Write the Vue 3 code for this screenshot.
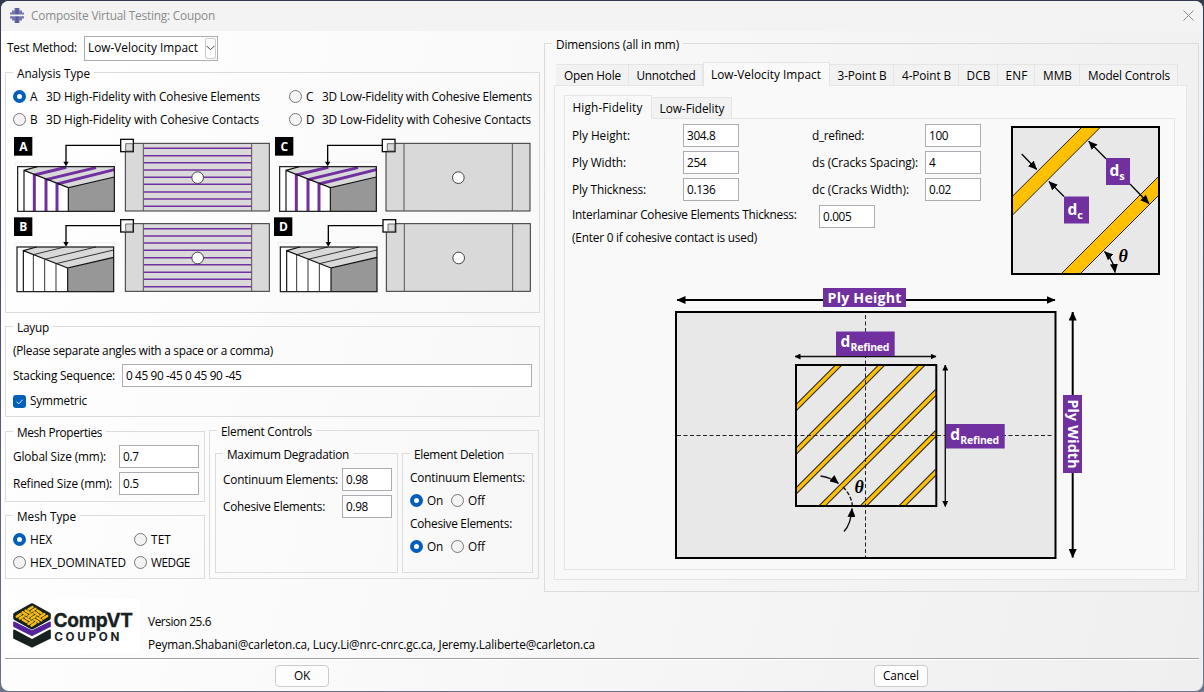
<script setup>
import { ref, reactive } from 'vue'

// Spreads a label's letters so that the text takes up the given width.
const vFit = {
  mounted(el, { value }) {
    if (!value) return
    const range = document.createRange()
    range.selectNodeContents(el)
    const natural = range.getBoundingClientRect().width
    el.style.letterSpacing = (value - natural) / el.textContent.length + 'px'
  }
}

const analysis = ref('A')
const analysisTypes = [
  { id: 'A', text: '3D High-Fidelity with Cohesive Elements', w: 214 },
  { id: 'C', text: '3D Low-Fidelity with Cohesive Elements', w: 210 },
  { id: 'B', text: '3D High-Fidelity with Cohesive Contacts', w: 213 },
  { id: 'D', text: '3D Low-Fidelity with Cohesive Contacts', w: 209 }
]
const meshType = ref('HEX')
const meshTypes = [
  { id: 'HEX', w: 22 },
  { id: 'TET', w: 20 },
  { id: 'HEX_DOMINATED', w: 96 },
  { id: 'WEDGE', w: 39 }
]
const form = reactive({
  stacking: '0 45 90 -45 0 45 90 -45',
  global: '0.7', refined: '0.5', contDeg: '0.98', cohDeg: '0.98',
  height: '304.8', width: '254', thick: '0.136',
  dref: '100', ds: '4', dc: '0.02', inter: '0.005'
})
const deletion = [
  { text: 'Continuum Elements:', w: 115 },
  { text: 'Cohesive Elements:', w: 102 }
]
const tabs = [
  { text: 'Open Hole', w: 57, box: 73 },
  { text: 'Unnotched', w: 59, box: 74 },
  { text: 'Low-Velocity Impact', w: 110, box: 127 },
  { text: '3-Point B', w: 49, box: 64 },
  { text: '4-Point B', w: 49, box: 65 },
  { text: 'DCB', w: 24, box: 39 },
  { text: 'ENF', w: 22, box: 37 },
  { text: 'MMB', w: 29, box: 45 },
  { text: 'Model Controls', w: 82, box: 98 }
]
const subTabs = [
  { text: 'High-Fidelity', w: 70, box: 88 },
  { text: 'Low-Fidelity', w: 65, box: 80 }
]
const dimsLeft = [
  { text: 'Ply Height:', w: 58, key: 'height' },
  { text: 'Ply Width:', w: 54, key: 'width' },
  { text: 'Ply Thickness:', w: 74, key: 'thick' }
]
const dimsRight = [
  { text: 'd_refined:', w: 52, key: 'dref' },
  { text: 'ds (Cracks Spacing):', w: 106, key: 'ds' },
  { text: 'dc (Cracks Width):', w: 97, key: 'dc' }
]

// Diagram panels, drawn in thirds of a pixel.
const panels = [
  { id: 'A', box: 42, cube: 0, link: 0, plate: 0, y: 0, bands: true, lines: true },
  { id: 'B', box: 42, cube: -2, link: 0, plate: 0, y: 241, bands: false, lines: true },
  { id: 'C', box: 825, cube: 786, link: 785, plate: 782, y: 0, bands: true, lines: false },
  { id: 'D', box: 822, cube: 788, link: 787, plate: 783, y: 241, bands: false, lines: false }
]
const plies = [55, 77, 98, 120, 142, 163, 186, 207, 229]

const stripes = [
  'M795 408.7L839.7 364', 'M795 452.3L882.7 364', 'M795 492L923 364',
  'M821 507L937 391.3', 'M862.3 507L937 432.3', 'M901 507L937 471'
]

// Woven tows of the logo's top layer.
const weave = []
for (let i = 0; i < 3; i++) {
  for (let j = 0; j < 3; j++) {
    const a = [17.6, 10.8], b = [-17.6, 10.8]
    const cx = 96 + (i - j) * 17.6, cy = 346.5 + (i + j + 1) * 10.8
    const [d, o] = (i + j) % 2 ? [a, b] : [b, a]
    for (const s of [-0.25, 0.25]) {
      const x = cx + o[0] * s, y = cy + o[1] * s
      weave.push(`M${x - d[0] * 0.34} ${y - d[1] * 0.34}L${x + d[0] * 0.34} ${y + d[1] * 0.34}`)
    }
  }
}
</script>

<template>
  <div class="desktop">
    <div class="window">
      <header class="titlebar">
        <svg class="app-icon" width="16" height="17" viewBox="0 0 16 17">
          <path d="M5.500 1h5v2.500h2.500v2h2v6h-2v2h-2.500v2.500h-5v-2.500h-2.500v-2h-2v-6h2v-2h2.500z" fill="#7775b0" />
          <path d="M6.500 1h3v15h-3z" fill="#5b5a9c" />
          <path d="M1 7.600h14v1.600h-14z" fill="#f3f3f3" />
        </svg>
        <span v-fit="184">Composite Virtual Testing: Coupon</span>
        <svg class="close" width="11" height="11" viewBox="0 0 11 11"><path d="M0.500 0.500l10 10M10.500 0.500l-10 10" stroke="#8a8a8a" fill="none" /></svg>
      </header>

      <main class="content">
        <section class="left">
          <div class="method">
            <span v-fit="70">Test Method:</span>
            <div class="combo">
              <span v-fit="110">Low-Velocity Impact</span>
              <div class="drop"><svg width="9" height="6" viewBox="0 0 9 6"><path d="M0.500 0.800l4 4l4-4" fill="none" stroke="#444" /></svg></div>
            </div>
          </div>

          <fieldset class="analysis">
            <legend><span v-fit="73">Analysis Type</span></legend>
            <div class="types">
              <label v-for="t in analysisTypes" :key="t.id" class="opt">
                <input v-model="analysis" type="radio" name="analysis" :value="t.id">
                <span class="letter">{{ t.id }}</span><span v-fit="t.w">{{ t.text }}</span>
              </label>
            </div>
            <svg class="schema" width="533" height="170" viewBox="6 131 533 170">
              <g transform="translate(0 130) scale(0.33333)">
                <g v-for="p in panels" :key="p.id" :transform="`translate(0 ${p.y})`">
                  <g :transform="`translate(${p.cube} 0)`">
                    <path d="M45 97H346V109H45z" fill="#fdfdfd" stroke="#ececec" stroke-width="2" />
                    <rect x="53" y="110" width="290" height="134" fill="#fff" />
                    <path d="M72 121L112 110H343V141L205 173z" fill="#d9d9d9" />
                    <path d="M205 173L343 141V244H205z" fill="#979797" />
                    <g v-if="p.bands" stroke="#7030a0" stroke-width="9" fill="none">
                      <path d="M103 133V243M138 147V243M171 160V243" />
                      <path d="M103 135L199 112M138 149L288 113M171 162L343 119" />
                    </g>
                    <path v-else d="M102 243V133L196 110M136 243V147L290 110M170 243V160L343 119" stroke="#333" stroke-width="3" fill="none" />
                    <path d="M205 243V173L343 141M72 243V121L205 173M72 121L112 110" stroke="#111" stroke-width="3.500" fill="none" />
                    <rect x="53" y="110" width="290" height="134" fill="none" stroke="#111" stroke-width="3.500" />
                  </g>
                  <g :transform="`translate(${p.plate} 0)`">
                    <rect x="376" y="40" width="432" height="203" fill="#d9d9d9" stroke="#333" stroke-width="3" />
                    <g v-if="p.lines" stroke="#7030a0" stroke-width="4.500">
                      <path v-for="y in plies" :key="y" :d="`M431 ${y}H755`" />
                    </g>
                    <path d="M430 40V243M755 40V243" stroke="#555" stroke-width="3" />
                    <circle cx="593" cy="143" r="17.500" fill="#fff" stroke="#444" stroke-width="3" />
                  </g>
                  <g :transform="`translate(${p.link} 0)`">
                    <rect x="362" y="28" width="38" height="37" fill="#fff" stroke="#111" stroke-width="4" />
                    <path d="M377 63V41H398V63z" fill="#d9d9d9" stroke="#555" stroke-width="2.500" />
                    <path d="M361 46H198V97" fill="none" stroke="#000" stroke-width="4" />
                    <path d="M190 95H206L198 109z" />
                  </g>
                  <rect :x="p.box" y="21" width="55" height="56" />
                  <text :x="p.box + 28" y="63" class="tag">{{ p.id }}</text>
                </g>
              </g>
            </svg>
          </fieldset>

          <fieldset class="layup">
            <legend><span v-fit="32">Layup</span></legend>
            <p class="note"><span v-fit="260">(Please separate angles with a space or a comma)</span></p>
            <div class="stack">
              <span v-fit="102">Stacking Sequence:</span>
              <input v-model="form.stacking" class="field">
            </div>
            <label class="check">
              <svg width="13" height="13" viewBox="0 0 13 13"><rect width="13" height="13" rx="3" fill="#005fb8" /><path d="M3.500 6.700l2.200 2.200l4-4.200" stroke="#d5e6f5" fill="none" /></svg>
              <span v-fit="57">Symmetric</span>
            </label>
          </fieldset>

          <div class="mesh-area">
            <div class="mesh-col">
              <fieldset class="mesh-props">
                <legend><span v-fit="85">Mesh Properties</span></legend>
                <div class="mesh-grid">
                  <span v-fit="93">Global Size (mm):</span><input v-model="form.global" class="field">
                  <span v-fit="99">Refined Size (mm):</span><input v-model="form.refined" class="field">
                </div>
              </fieldset>
              <fieldset class="mesh-type">
                <legend><span v-fit="59">Mesh Type</span></legend>
                <div class="type-grid">
                  <label v-for="m in meshTypes" :key="m.id" class="opt">
                    <input v-model="meshType" type="radio" name="mesh" :value="m.id"><span v-fit="m.w">{{ m.id }}</span>
                  </label>
                </div>
              </fieldset>
            </div>
            <fieldset class="controls">
              <legend><span v-fit="91">Element Controls</span></legend>
              <div class="controls-row">
                <fieldset class="degradation">
                  <legend><span v-fit="122">Maximum Degradation</span></legend>
                  <div class="deg-grid">
                    <span v-fit="115">Continuum Elements:</span><input v-model="form.contDeg" class="field">
                    <span v-fit="102">Cohesive Elements:</span><input v-model="form.cohDeg" class="field">
                  </div>
                </fieldset>
                <fieldset class="deletion">
                  <legend><span v-fit="90">Element Deletion</span></legend>
                  <div v-for="d in deletion" :key="d.text" class="del-block">
                    <div class="del-row"><span v-fit="d.w">{{ d.text }}</span></div>
                    <div class="del-row">
                      <label class="opt on"><input type="radio" :name="d.text" checked><span v-fit="16">On</span></label>
                      <label class="opt"><input type="radio" :name="d.text"><span v-fit="17">Off</span></label>
                    </div>
                  </div>
                </fieldset>
              </div>
            </fieldset>
          </div>
        </section>

        <section class="right">
          <fieldset class="dimensions">
            <legend><span v-fit="123">Dimensions (all in mm)</span></legend>
            <nav class="tabs outer">
              <div v-for="(t, i) in tabs" :key="t.text" class="tab" :class="{ active: i === 2 }" :style="{ width: t.box + 'px' }"><span v-fit="t.w">{{ t.text }}</span></div>
            </nav>
            <div class="panel">
              <nav class="tabs inner">
                <div v-for="(t, i) in subTabs" :key="t.text" class="tab" :class="{ active: i === 0 }" :style="{ width: t.box + 'px' }"><span v-fit="t.w">{{ t.text }}</span></div>
              </nav>
              <div class="subpanel">
                <div class="upper">
                  <div class="inputs">
                    <div class="cols">
                      <div class="dim-grid">
                        <template v-for="d in dimsLeft" :key="d.key">
                          <span v-fit="d.w">{{ d.text }}</span><input v-model="form[d.key]" class="field">
                        </template>
                      </div>
                      <div class="dim-grid second">
                        <template v-for="d in dimsRight" :key="d.key">
                          <span v-fit="d.w">{{ d.text }}</span><input v-model="form[d.key]" class="field">
                        </template>
                      </div>
                    </div>
                    <div class="inter">
                      <span v-fit="224.5">Interlaminar Cohesive Elements Thickness:</span><input v-model="form.inter" class="field">
                    </div>
                    <p class="hint"><span v-fit="185">(Enter 0 if cohesive contact is used)</span></p>
                  </div>
                  <svg class="detail" width="150" height="150" viewBox="1011 126 150 150">
                    <defs>
                      <marker id="tip" viewBox="0 0 9 8" refX="8.500" refY="4" markerWidth="9" markerHeight="8" markerUnits="userSpaceOnUse" orient="auto-start-reverse"><path d="M0 0L9 4L0 8z" /></marker>
                    </defs>
                    <rect x="1012" y="127" width="147" height="147" fill="#e8e8e8" />
                    <path d="M1012 196.700L1082 127H1100.600L1012 215.600z" fill="#ffc000" stroke="#222" />
                    <path d="M1061 274L1159 176V195L1080 274z" fill="#ffc000" stroke="#222" />
                    <rect x="1012" y="127" width="147" height="147" fill="none" stroke="#000" stroke-width="2" />
                    <g stroke="#000" stroke-width="1.300" fill="none">
                      <path d="M1021.700 154L1036.700 169.500" marker-end="url(#tip)" />
                      <path d="M1064 196.500L1049 181.500" marker-end="url(#tip)" />
                      <path d="M1106 158.700L1088.700 141.300" marker-end="url(#tip)" />
                      <path d="M1130 184L1149 203.700" marker-end="url(#tip)" />
                      <path d="M1104.500 251.500Q1113.500 260 1115 272.500" marker-start="url(#tip)" marker-end="url(#tip)" />
                    </g>
                    <rect x="1106" y="158" width="24" height="27" fill="#7030a0" />
                    <rect x="1064" y="196.500" width="25" height="27" fill="#7030a0" />
                    <text x="1109.500" y="176" class="sym">d<tspan dy="4" class="sub">s</tspan></text>
                    <text x="1067.500" y="214.500" class="sym">d<tspan dy="4" class="sub">c</tspan></text>
                    <text x="1118.500" y="262" class="theta">θ</text>
                  </svg>
                </div>
                <svg class="plan" width="420" height="280" viewBox="670 284 420 280">
                  <defs>
                    <marker id="big" viewBox="0 0 9 8" refX="8.500" refY="4" markerWidth="9" markerHeight="8" markerUnits="userSpaceOnUse" orient="auto-start-reverse"><path d="M0 0L9 4L0 8z" /></marker>
                    <marker id="mini" viewBox="0 0 6 6" refX="5.500" refY="3" markerWidth="6" markerHeight="6" markerUnits="userSpaceOnUse" orient="auto-start-reverse"><path d="M0 0L6 3L0 6z" /></marker>
                    <clipPath id="core"><rect x="796" y="365" width="140" height="141" /></clipPath>
                  </defs>
                  <rect x="676" y="312" width="379.500" height="246" fill="#e8e8e8" stroke="#000" stroke-width="2" />
                  <g clip-path="url(#core)">
                    <path v-for="s in stripes" :key="s" :d="s" stroke="#222" stroke-width="5.600" />
                    <path v-for="s in stripes" :key="s + 'f'" :d="s" stroke="#ffc000" stroke-width="3.600" />
                  </g>
                  <path d="M865.500 315V557M677 435.500H1054" stroke="#222" stroke-dasharray="4 2.500" fill="none" />
                  <rect x="796" y="365" width="140.300" height="141" fill="none" stroke="#000" stroke-width="2" />
                  <path d="M677 300H1055" stroke="#000" stroke-width="2" marker-start="url(#big)" marker-end="url(#big)" />
                  <path d="M1072.700 312V557.500" stroke="#000" stroke-width="2" marker-start="url(#big)" marker-end="url(#big)" />
                  <g stroke="#111" stroke-width="1.400" fill="none">
                    <path d="M795 356.500H936" marker-start="url(#mini)" marker-end="url(#mini)" />
                    <path d="M945.300 365V506.500" marker-start="url(#mini)" marker-end="url(#mini)" />
                    <path d="M820.500 476Q831 477.500 838.500 483.500" marker-end="url(#big)" />
                    <path d="M844 531.500Q851 524 852 508.500" marker-end="url(#big)" />
                    <path d="M843 487Q851 495 852.300 505" stroke-dasharray="4 2" />
                  </g>
                  <g fill="#7030a0">
                    <rect x="823" y="288" width="83" height="19" />
                    <rect x="836" y="331.500" width="58.700" height="24.500" />
                    <rect x="945.700" y="424" width="59" height="24.500" />
                    <rect x="1063" y="395" width="19" height="78" />
                  </g>
                  <text x="827.500" y="303" class="sym dim" textLength="74">Ply Height</text>
                  <text transform="translate(1068 399.500) rotate(90)" class="sym dim" textLength="69">Ply Width</text>
                  <text x="840.500" y="347" class="sym">d<tspan x="850.500" dy="4" class="sub2" textLength="39">Refined</tspan></text>
                  <text x="950.200" y="439.500" class="sym">d<tspan x="960.200" dy="4" class="sub2" textLength="39">Refined</tspan></text>
                  <text x="854.500" y="493" class="theta">θ</text>
                </svg>
              </div>
            </div>
          </fieldset>
        </section>
      </main>

      <footer class="about">
        <svg class="logo" width="135" height="54" viewBox="5 599 135 54">
          <rect x="5" y="599" width="135" height="54" fill="#fff" />
          <g transform="translate(0 490) scale(0.33333)" stroke-linejoin="round">
            <path d="M42 421L96 450L150 421V444L96 470L42 444z" fill="#17211f" stroke="#17211f" stroke-width="5" />
            <path d="M42 397L96 424L150 397V409L96 436L42 409z" fill="#55249b" stroke="#55249b" stroke-width="5" />
            <path d="M96 346L146 374V384L96 412L46 384V374z" fill="#17211f" stroke="#17211f" stroke-width="13" />
            <path v-for="w in weave" :key="w" :d="w" stroke="#f8bd14" stroke-width="7.500" stroke-linecap="round" />
          </g>
          <text x="53.500" y="626.700" class="brand" textLength="79.500">CompVT</text>
          <text x="54.300" y="640.500" class="product" textLength="65">COUPON</text>
        </svg>
        <div class="credits">
          <div><span v-fit="63">Version 25.6</span></div>
          <div><span v-fit="447">Peyman.Shabani@carleton.ca, Lucy.Li@nrc-cnrc.gc.ca, Jeremy.Laliberte@carleton.ca</span></div>
        </div>
      </footer>
      <div class="actions">
        <button><span v-fit="16">OK</span></button>
        <button><span v-fit="36">Cancel</span></button>
      </div>
    </div>
  </div>
</template>

<style>
html, body { margin: 0; overflow: hidden; }
</style>

<style scoped>
* { box-sizing: border-box; }
.desktop {
  width: 1204px; height: 692px; padding: 1px;
  background: linear-gradient(#33384d, #6b7186);
  font: 11.8px/16px "Open Sans", "Noto Sans", sans-serif; color: #000;
}
.window {
  width: 1202px; height: 690px; border-radius: 8px; overflow: hidden;
  background: linear-gradient(105deg, #fff 0%, #fafafa 35%, #f3f3f3 75%, #efefef 100%);
}
.window span { white-space: pre; display: inline-block; line-height: 14px; padding-bottom: 2px; }
.titlebar {
  height: 30px; background: #f3f3f3; display: flex; align-items: center;
  padding: 0 9px 1px 8px; color: #8b8b8b;
}
.titlebar span { padding-bottom: 1px; }
.app-icon { margin-right: 6px; }
.close { margin-left: auto; }
.content { display: flex; height: 561px; padding-left: 4px; }
.left { width: 535px; margin-right: 4px; }
.right { width: 655px; padding-top: 5px; }

fieldset { margin: 0; padding: 0; border: 1px solid #dcdcdc; min-width: 0; }
legend { height: 15px; line-height: 16px; margin-left: 7px; padding: 0 4px; }

.method { height: 34px; display: flex; align-items: center; padding-left: 2px; }
.method > span { width: 77px; }
.combo {
  width: 134px; height: 25px; border: 1px solid #abadb3; background: #fff;
  display: flex; align-items: center; justify-content: space-between; padding: 0 1px 0 3px;
}
.drop { width: 11px; height: 21px; border: 1px solid #ccc; border-radius: 2px; display: flex; align-items: center; justify-content: center; flex: none; }

.field {
  height: 23px; border: 1px solid #abadb3; background: #fff; padding: 0 0 1px 3px; margin: 0; min-width: 0;
  font: inherit; letter-spacing: -0.35px; color: #000; outline: 0; border-radius: 0;
}
.opt { display: flex; align-items: center; height: 23px; }
.opt input {
  appearance: none; width: 13px; height: 13px; margin: 0 4px 0 0; flex: none;
  border: 1px solid #777; border-radius: 50%; background: #f3f3f3;
}
.opt input:checked { border: 4px solid #005fb8; background: #fff; }

.analysis { height: 248px; }
.types { display: grid; grid-template-columns: 276px 1fr; padding: 5px 0 0 7px; }
.types .letter { width: 16px; }
.schema { display: block; }
.tag { font: 700 36px "Open Sans", sans-serif; fill: #fff; text-anchor: middle; }

.layup { height: 98px; margin-top: 6px; }
.note { margin: 0; padding: 8px 0 0 7px; height: 30px; }
.stack { display: flex; align-items: center; padding: 0 7px; gap: 6px; }
.stack > span { width: 103px; }
.stack .field { flex: 1; }
.check { display: flex; align-items: center; gap: 4px; padding: 6px 0 0 7px; }

.mesh-area { display: flex; margin-top: 6px; gap: 4px; align-items: flex-start; }
.mesh-col { width: 200px; padding-top: 1px; }
.mesh-props { height: 78px; }
.mesh-grid { display: grid; grid-template-columns: 106px 80px; row-gap: 4px; padding: 6px 0 0 7px; align-items: center; }
.mesh-type { height: 71px; margin-top: 6px; }
.type-grid { display: grid; grid-template-columns: 121px 1fr; padding: 5px 0 0 7px; }
.controls { width: 330px; height: 156px; }
.controls-row { display: flex; gap: 4px; padding: 8px 0 0 5px; }
.degradation { width: 183px; height: 127px; }
.deg-grid { display: grid; grid-template-columns: 119px 50px; row-gap: 4px; padding: 7px 0 0 7px; align-items: center; }
.deletion { width: 131px; height: 127px; }
.del-row { display: flex; align-items: center; height: 23px; padding-left: 7px; }
.del-block:first-of-type { padding-top: 5px; }
.on { width: 41px; }

.dimensions { height: 556px; }
.tabs { display: flex; align-items: flex-end; }
.tabs.outer { padding-left: 11px; margin-top: 10px; height: 24px; }
.tabs.inner { padding-left: 9px; margin-top: 8px; height: 24px; }
.tab {
  height: 21px; border: 1px solid #e5e5e5; border-width: 1px 1px 0 0; background: #f2f2f2;
  display: flex; align-items: center; justify-content: center; padding-left: 1px;
}
.window .tab span { padding-bottom: 0; }
.tab.active { height: 24px; background: #f9f9f9; margin-bottom: -1px; padding: 0 1px 2px 0; border-left-width: 1px; }
.panel { width: 633px; height: 495px; margin-left: 9px; border: 1px solid #e5e5e5; background: #f9f9f9; }
.subpanel { width: 611px; height: 452px; margin-left: 9px; border: 1px solid #e5e5e5; background: #f9f9f9; }
.upper { display: flex; height: 165px; padding: 5px 0 0 7px; }
.inputs { width: 439px; }
.cols { display: flex; }
.dim-grid { display: grid; grid-template-columns: 111px 56px; row-gap: 4px; align-items: center; }
.second { grid-template-columns: 113px 56px; margin-left: 73px; }
.inter { display: flex; margin-top: 4px; }
.inter > span { width: 247px; margin-top: 2px; }
.inter .field { width: 56px; }
.hint { margin: 1px 0 0; }
.detail { margin-top: 2px; }
.plan { display: block; margin-left: 105px; }
.sym { font: 700 15.500px "Open Sans", sans-serif; fill: #fff; }
.dim { font-size: 14.200px; }
.sub { font-size: 11px; }
.sub2 { font-size: 10.500px; }
.theta { font: italic 700 18px "Liberation Serif", serif; }

.about { display: flex; height: 66px; padding: 7px 0 0 4px; }
.credits { margin-left: 8px; padding-top: 11px; }
.credits div { height: 23px; display: flex; align-items: center; }
.brand { font: 700 19px Inter, sans-serif; fill: #17211f; stroke: #17211f; stroke-width: 0.3px; }
.product { font: 700 11.700px Inter, sans-serif; fill: #17211f; }
.actions {
  margin: 0 4px; height: 33px; border-top: 1px solid #a0a0a0; box-shadow: inset 0 1px #fff;
  display: flex; padding: 6px 0 0 270px; gap: 545px;
}
button {
  width: 54px; height: 22px; border: 1px solid #ccc; border-radius: 4px; background: #fdfdfd;
  font: inherit; color: #000; padding: 0; display: flex; align-items: center; justify-content: center;
}
</style>
